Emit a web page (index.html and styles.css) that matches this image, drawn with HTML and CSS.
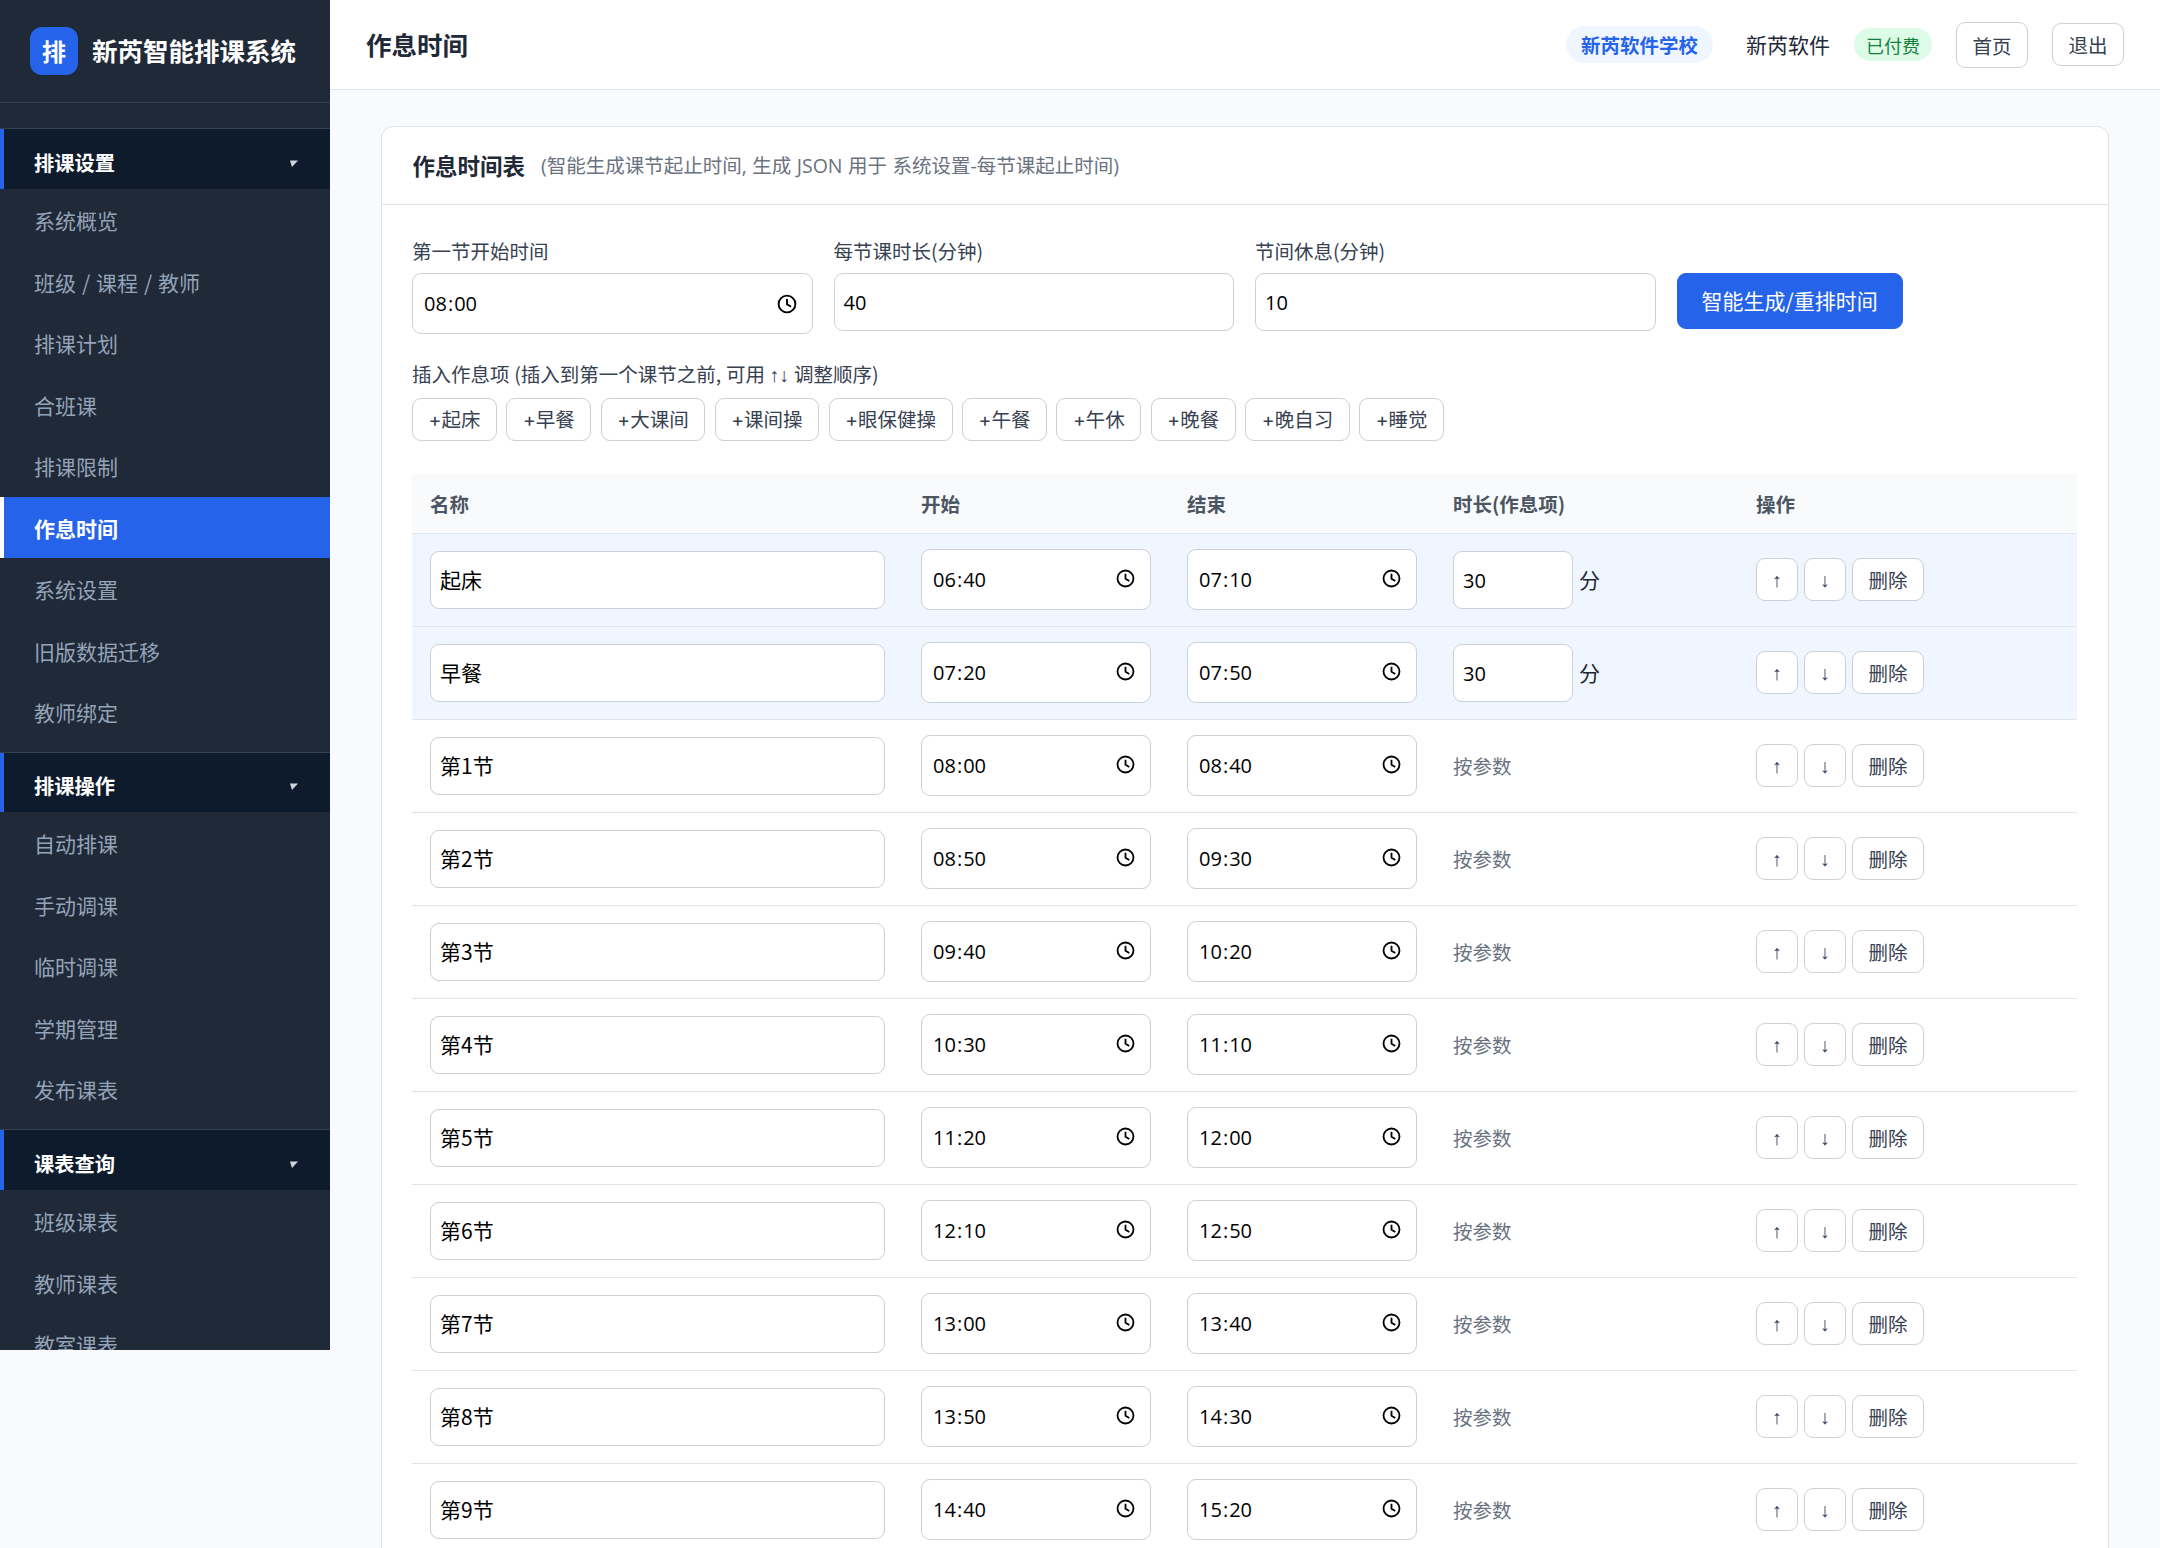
FILE: index.html
```
<!DOCTYPE html>
<html lang="zh-CN">
<head>
    <meta charset="UTF-8">
    <meta name="viewport" content="width=device-width, initial-scale=1.0">
    <title>作息时间 - 新芮智能排课系统</title>
    <link rel="stylesheet" href="styles.css">
</head>
<body>
    <aside class="sidebar">
        <div class="brand">
            <div class="brand-logo">排</div>
            <div class="brand-name">新芮智能排课系统</div>
        </div>
        <nav class="menu">
            <div class="menu-group">
                <div class="menu-title">排课设置<svg class="caret" viewBox="0 0 8 7"><path d="M0 0.5H8L2 7Z"/></svg></div>
                <a class="menu-item">系统概览</a>
                <a class="menu-item">班级 / 课程 / 教师</a>
                <a class="menu-item">排课计划</a>
                <a class="menu-item">合班课</a>
                <a class="menu-item">排课限制</a>
                <a class="menu-item active">作息时间</a>
                <a class="menu-item">系统设置</a>
                <a class="menu-item">旧版数据迁移</a>
                <a class="menu-item">教师绑定</a>
            </div>
            <div class="menu-group">
                <div class="menu-title">排课操作<svg class="caret" viewBox="0 0 8 7"><path d="M0 0.5H8L2 7Z"/></svg></div>
                <a class="menu-item">自动排课</a>
                <a class="menu-item">手动调课</a>
                <a class="menu-item">临时调课</a>
                <a class="menu-item">学期管理</a>
                <a class="menu-item">发布课表</a>
            </div>
            <div class="menu-group">
                <div class="menu-title">课表查询<svg class="caret" viewBox="0 0 8 7"><path d="M0 0.5H8L2 7Z"/></svg></div>
                <a class="menu-item">班级课表</a>
                <a class="menu-item">教师课表</a>
                <a class="menu-item">教室课表</a>
            </div>
        </nav>
    </aside>

    <div class="main">
        <header class="topbar">
            <h1>作息时间</h1>
            <div class="topbar-right">
                <span class="school">新芮软件学校</span>
                <span class="user">新芮软件</span>
                <span class="badge">已付费</span>
                <a class="btn btn-home">首页</a>
                <a class="btn">退出</a>
            </div>
        </header>

        <div class="content">
            <section class="card">
                <div class="card-header">
                    <h2>作息时间表</h2>
                    <span class="hint">(智能生成课节起止时间, 生成 JSON 用于 系统设置-每节课起止时间)</span>
                </div>
                <div class="card-body">
                    <div class="form-row">
                        <div class="field">
                            <label>第一节开始时间</label>
                            <div class="input time"><span>08<i>:</i>00</span><svg class="clock" viewBox="0 0 20 20"><circle cx="10" cy="10" r="8.4"/><path d="M10 5V10.3L14 12.6"/></svg></div>
                        </div>
                        <div class="field">
                            <label>每节课时长(分钟)</label>
                            <div class="input num">40</div>
                        </div>
                        <div class="field">
                            <label>节间休息(分钟)</label>
                            <div class="input num">10</div>
                        </div>
                        <button class="btn-primary">智能生成/重排时间</button>
                    </div>

                    <div class="insert-label">插入作息项 (插入到第一个课节之前, 可用 <span class="arrows">↑↓</span> 调整顺序)</div>
                    <div class="chips">
                        <a class="btn">+起床</a>
                        <a class="btn">+早餐</a>
                        <a class="btn">+大课间</a>
                        <a class="btn">+课间操</a>
                        <a class="btn">+眼保健操</a>
                        <a class="btn">+午餐</a>
                        <a class="btn">+午休</a>
                        <a class="btn">+晚餐</a>
                        <a class="btn">+晚自习</a>
                        <a class="btn">+睡觉</a>
                    </div>

                    <table>
                        <thead>
                            <tr>
                                <th class="col-name">名称</th>
                                <th class="col-start">开始</th>
                                <th class="col-end">结束</th>
                                <th class="col-len">时长(作息项)</th>
                                <th>操作</th>
                            </tr>
                        </thead>
                        <tbody id="rows"></tbody>
                    </table>
                </div>
            </section>
        </div>
    </div>

    <script>
        const rows = [
            ['起床', '06:40', '07:10', 30],
            ['早餐', '07:20', '07:50', 30],
            ['第1节', '08:00', '08:40'],
            ['第2节', '08:50', '09:30'],
            ['第3节', '09:40', '10:20'],
            ['第4节', '10:30', '11:10'],
            ['第5节', '11:20', '12:00'],
            ['第6节', '12:10', '12:50'],
            ['第7节', '13:00', '13:40'],
            ['第8节', '13:50', '14:30'],
            ['第9节', '14:40', '15:20']
        ];

        const clock = document.querySelector('.clock').outerHTML;

        function timeInput(value) {
            return '<div class="input time"><span>' + value.replace(':', '<i>:</i>') + '</span>' + clock + '</div>';
        }

        document.getElementById('rows').innerHTML = rows.map(function(row) {
            const len = row[3]
                ? '<div class="len"><div class="input num">' + row[3] + '</div>分</div>'
                : '<span class="muted">按参数</span>';
            return '<tr' + (row[3] ? ' class="extra"' : '') + '>' +
                '<td><div class="input">' + row[0] + '</div></td>' +
                '<td>' + timeInput(row[1]) + '</td>' +
                '<td>' + timeInput(row[2]) + '</td>' +
                '<td>' + len + '</td>' +
                '<td><div class="ops"><a class="btn btn-arrow">↑</a><a class="btn btn-arrow">↓</a><a class="btn">删除</a></div></td>' +
                '</tr>';
        }).join('');
    </script>
</body>
</html>
```

FILE: styles.css
```
* {
    box-sizing: border-box;
}
body {
    margin: 0;
    height: 1548px;
    overflow: hidden;
    display: flex;
    align-items: flex-start;
    background: #f9fafb;
    color: #1f2937;
    font-family: "Noto Sans CJK SC", sans-serif;
    font-size: 21px;
    line-height: 1.5;
}

/* sidebar */
.sidebar {
    width: 330px;
    height: 1350px;
    flex: none;
    overflow: hidden;
    background: #1f2937;
    color: #fff;
}
.brand {
    display: flex;
    align-items: center;
    gap: 14px;
    height: 103px;
    padding: 0 30px;
    border-bottom: 1px solid #334155;
}
.brand-logo {
    width: 48px;
    height: 48px;
    border-radius: 12px;
    background: #2563eb;
    font-size: 24px;
    font-weight: 700;
    line-height: 47px;
    text-align: center;
}
.brand-name {
    padding-bottom: 2px;
    font-size: 25.5px;
    font-weight: 700;
    white-space: nowrap;
}
.menu {
    padding-top: 25px;
}
.menu-group {
    margin-bottom: 9.5px;
}
.menu-title {
    display: flex;
    align-items: center;
    justify-content: space-between;
    height: 61px;
    padding: 8px 32px 0 34px;
    border-top: 1px solid #334155;
    box-shadow: inset 4px 0 #2563eb;
    background: #0d1b2d;
    font-size: 20.25px;
    font-weight: 700;
}
.menu-group:nth-child(2) .menu-title {
    height: 60px;
}
.caret {
    width: 8px;
    height: 7px;
    fill: #d1d5db;
}
.menu-item {
    display: block;
    height: 61.5px;
    padding-left: 34px;
    line-height: 62px;
    word-spacing: 1.2px;
    color: #94a3b8;
}
.menu-item.active {
    box-shadow: inset 4px 0 #fff;
    background: #2563eb;
    color: #fff;
    font-weight: 700;
}

/* top bar */
.main {
    flex: 1;
    min-width: 0;
}
.topbar {
    display: flex;
    align-items: center;
    justify-content: space-between;
    height: 90px;
    padding: 0 36px;
    background: #fff;
    border-bottom: 1px solid #e1e4e8;
}
.topbar h1 {
    margin: 0;
    padding-bottom: 1px;
    font-size: 25.5px;
    font-weight: 700;
}
.topbar-right {
    display: flex;
    align-items: center;
    gap: 24px;
}
.school {
    height: 37px;
    margin-right: 9px;
    padding: 0 15px;
    border-radius: 19px;
    background: #eff6ff;
    color: #2563eb;
    font-size: 19.5px;
    font-weight: 700;
    line-height: 38px;
}
.badge {
    height: 33px;
    padding: 0 12px;
    border-radius: 17px;
    background: #dcfce7;
    color: #15803d;
    font-size: 18px;
    line-height: 34px;
}
.btn {
    display: inline-block;
    height: 43px;
    padding: 0 15.5px;
    border: 1px solid #ccd0d7;
    border-radius: 9px;
    background: #fff;
    color: #374151;
    font-size: 19.5px;
    line-height: 42px;
    text-align: center;
    white-space: nowrap;
}
.btn-home {
    height: 46px;
    line-height: 45px;
}

/* card */
.content {
    padding: 36px 51px;
}
.card {
    background: #fff;
    border: 1px solid #e1e4e8;
    border-radius: 12px;
}
.card-header {
    display: flex;
    align-items: center;
    height: 78px;
    padding: 0 30.5px;
    border-bottom: 1px solid #e1e4e8;
}
.card-header h2 {
    margin: 0 16px 0 0;
    font-size: 22.5px;
    font-weight: 700;
}
.hint {
    padding-top: 1px;
    color: #6b7280;
    font-family: "Open Sans", "Noto Sans CJK SC", sans-serif;
    font-size: 19.5px;
    word-spacing: 0.4px;
}
.card-body {
    padding: 30px;
}
.form-row {
    display: grid;
    grid-template-columns: 400.5px 400.5px 400.5px auto;
    justify-content: start;
    gap: 21px;
    height: 113px;
}
.field label {
    display: block;
    height: 38px;
    color: #374151;
    font-size: 19.5px;
    line-height: 31px;
}
.input {
    height: 58px;
    padding: 0 9px;
    border: 1px solid #ccd0d7;
    border-radius: 9px;
    background: #fff;
    color: #000;
    line-height: 55px;
}
.num,
.time {
    font-family: "Open Sans", sans-serif;
    font-size: 20px;
    line-height: 57px;
}
.time {
    display: flex;
    align-items: center;
    justify-content: space-between;
    height: 61px;
    padding: 0 15px 0 11px;
}
.time i {
    padding: 0 1px;
    font-style: normal;
}
.clock {
    width: 20px;
    height: 20px;
    fill: none;
    stroke: #000;
    stroke-width: 1.9;
}
.btn-primary {
    align-self: start;
    height: 56px;
    margin-top: 38px;
    padding: 0 24px 2px;
    border: 1px solid #2563eb;
    border-radius: 9px;
    background: #2563eb;
    color: #fff;
    font-family: inherit;
    font-size: 21px;
}
.insert-label {
    height: 50px;
    color: #374151;
    font-size: 19.5px;
    line-height: 51px;
    word-spacing: 0.4px;
}
.arrows {
    font-family: "Liberation Sans", sans-serif;
}
.chips {
    display: flex;
    gap: 9.5px;
    margin-bottom: 33px;
}
.chips .btn {
    font-family: Inter, "Noto Sans CJK SC", sans-serif;
}

/* schedule table */
table {
    width: 1665px;
    table-layout: fixed;
    border-collapse: collapse;
}
th {
    height: 59px;
    padding: 0 18px;
    background: #f9fafb;
    border-bottom: 1px solid #e1e4e8;
    color: #4b5563;
    font-size: 19.5px;
    font-weight: 700;
    text-align: left;
}
td {
    height: 93px;
    padding: 0 18px;
    border-bottom: 1px solid #e1e4e8;
}
.col-name {
    width: 491px;
}
.col-start,
.col-end {
    width: 266px;
}
.col-len {
    width: 303px;
}
td .clock {
    width: 19px;
    height: 19px;
    margin-bottom: 2px;
}
.extra td {
    background: #eff6ff;
}
.len {
    display: flex;
    align-items: center;
    gap: 6px;
}
.len .input {
    width: 120px;
}
.muted {
    color: #6b7280;
    font-size: 19.5px;
}
.ops {
    display: flex;
    gap: 6px;
}
.btn-arrow {
    width: 42px;
    padding: 0;
    font-family: "Liberation Sans", sans-serif;
}
```
